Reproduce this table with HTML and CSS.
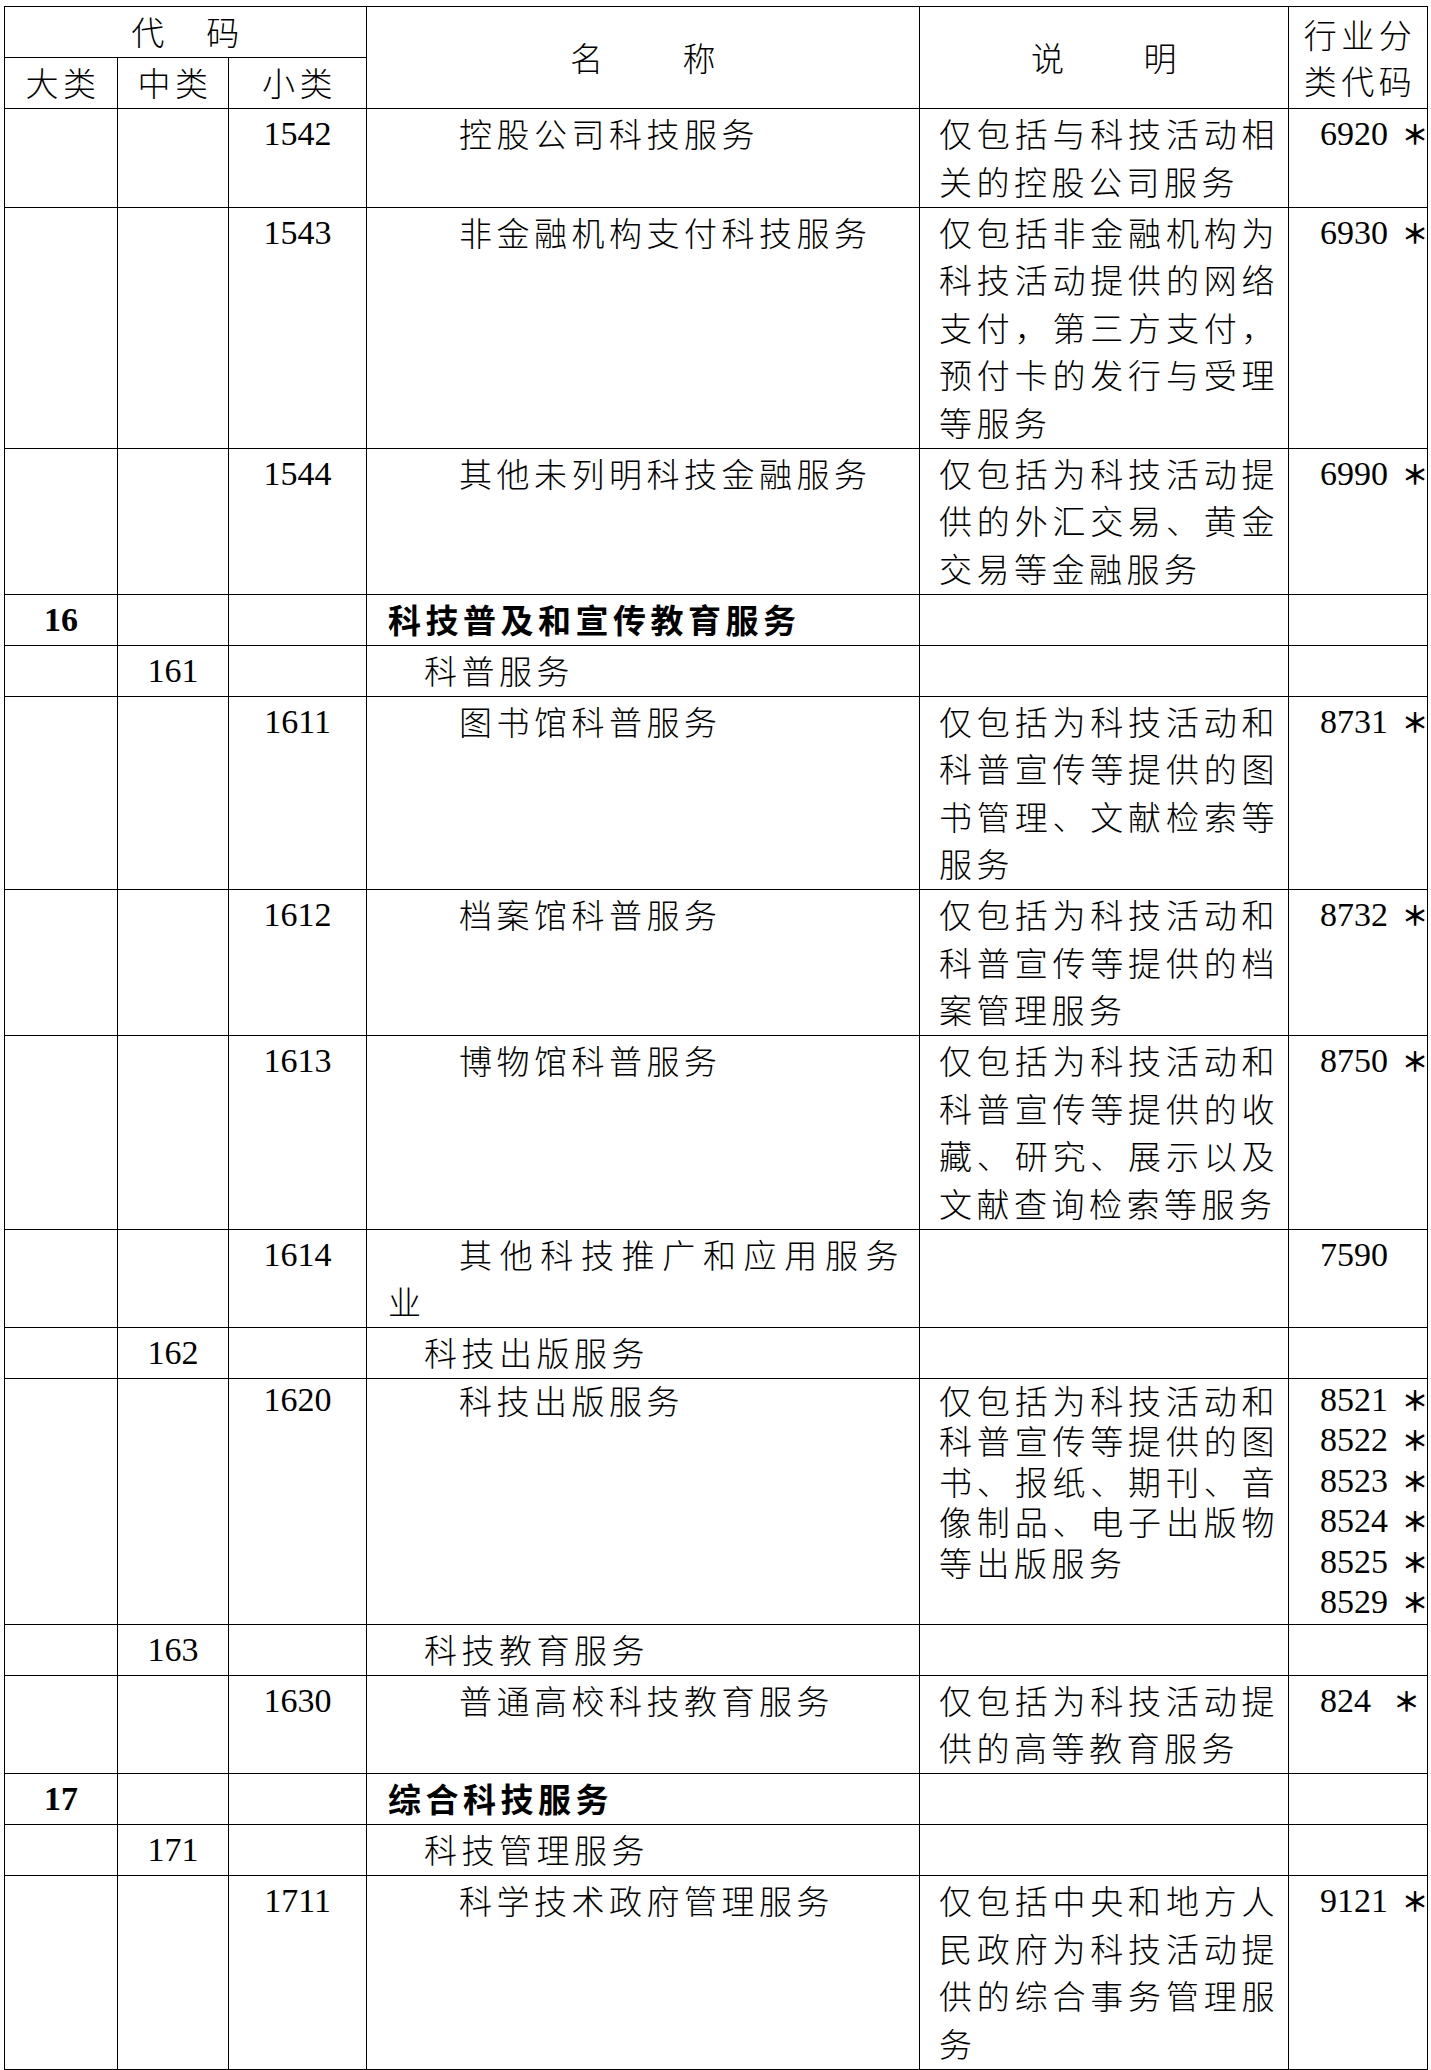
FILE: index.html
```html
<!DOCTYPE html>
<html lang="zh-CN">
<head>
<meta charset="utf-8">
<title>科技服务分类</title>
<link rel="stylesheet" href="styles.css">
</head>
<body>
<div class="page">
<table class="code-table">
  <colgroup>
    <col class="c-major"><col class="c-mid"><col class="c-minor"><col class="c-name"><col class="c-desc"><col class="c-ind">
  </colgroup>
  <thead>
    <tr class="h1">
      <th colspan="3">代　码</th>
      <th rowspan="2">名　　称</th>
      <th rowspan="2">说　　明</th>
      <th rowspan="2" class="h-ind">行业分<br>类代码</th>
    </tr>
    <tr class="h2"><th>大类</th><th>中类</th><th>小类</th></tr>
  </thead>
  <tbody>
    <tr><td></td><td></td><td class="num">1542</td><td class="name l3">控股公司科技服务</td><td class="desc">仅包括与科技活动相关的控股公司服务</td><td class="ind">6920 <span class="star">＊</span></td></tr>
    <tr><td></td><td></td><td class="num">1543</td><td class="name l3">非金融机构支付科技服务</td><td class="desc">仅包括非金融机构为科技活动提供的网络支付，第三方支付，预付卡的发行与受理等服务</td><td class="ind">6930 <span class="star">＊</span></td></tr>
    <tr><td></td><td></td><td class="num">1544</td><td class="name l3">其他未列明科技金融服务</td><td class="desc">仅包括为科技活动提供的外汇交易、黄金交易等金融服务</td><td class="ind">6990 <span class="star">＊</span></td></tr>
    <tr><td class="num major">16</td><td></td><td></td><td class="name l1 bold">科技普及和宣传教育服务</td><td></td><td></td></tr>
    <tr><td></td><td class="num">161</td><td></td><td class="name l2">科普服务</td><td></td><td></td></tr>
    <tr><td></td><td></td><td class="num">1611</td><td class="name l3">图书馆科普服务</td><td class="desc">仅包括为科技活动和科普宣传等提供的图书管理、文献检索等服务</td><td class="ind">8731 <span class="star">＊</span></td></tr>
    <tr><td></td><td></td><td class="num">1612</td><td class="name l3">档案馆科普服务</td><td class="desc">仅包括为科技活动和科普宣传等提供的档案管理服务</td><td class="ind">8732 <span class="star">＊</span></td></tr>
    <tr><td></td><td></td><td class="num">1613</td><td class="name l3">博物馆科普服务</td><td class="desc">仅包括为科技活动和科普宣传等提供的收藏、研究、展示以及文献查询检索等服务</td><td class="ind">8750 <span class="star">＊</span></td></tr>
    <tr><td></td><td></td><td class="num">1614</td><td class="name l3">其他科技推广和应用服务业</td><td class="desc"></td><td class="ind">7590</td></tr>
    <tr><td></td><td class="num">162</td><td></td><td class="name l2">科技出版服务</td><td></td><td></td></tr>
    <tr class="tight"><td></td><td></td><td class="num">1620</td><td class="name l3">科技出版服务</td><td class="desc">仅包括为科技活动和科普宣传等提供的图书、报纸、期刊、音像制品、电子出版物等出版服务</td><td class="ind">8521 <span class="star">＊</span><br>8522 <span class="star">＊</span><br>8523 <span class="star">＊</span><br>8524 <span class="star">＊</span><br>8525 <span class="star">＊</span><br>8529 <span class="star">＊</span></td></tr>
    <tr><td></td><td class="num">163</td><td></td><td class="name l2">科技教育服务</td><td></td><td></td></tr>
    <tr><td></td><td></td><td class="num">1630</td><td class="name l3">普通高校科技教育服务</td><td class="desc">仅包括为科技活动提供的高等教育服务</td><td class="ind">824&nbsp; <span class="star">＊</span></td></tr>
    <tr><td class="num major">17</td><td></td><td></td><td class="name l1 bold">综合科技服务</td><td></td><td></td></tr>
    <tr><td></td><td class="num">171</td><td></td><td class="name l2">科技管理服务</td><td></td><td></td></tr>
    <tr><td></td><td></td><td class="num">1711</td><td class="name l3">科学技术政府管理服务</td><td class="desc">仅包括中央和地方人民政府为科技活动提供的综合事务管理服务</td><td class="ind">9121 <span class="star">＊</span></td></tr>
  </tbody>
</table>
</div>
</body>
</html>
```

FILE: styles.css
```css
html, body {
  margin: 0;
  padding: 0;
  background: #fff;
  color: #000;
}

.page {
  padding: 6px 4px 2px 4px;
}

.code-table {
  width: 1423px;
  table-layout: fixed;
  border-collapse: collapse;
  font-family: "Noto Sans CJK SC", "Noto Sans CJK JP", sans-serif;
  font-weight: 300;
  font-size: 33px;
  letter-spacing: 4.5px;
  line-height: 47.5px;
}

.c-major { width: 113px; }
.c-mid   { width: 111px; }
.c-minor { width: 138px; }
.c-name  { width: 553px; }
.c-desc  { width: 369px; }
.c-ind   { width: 139px; }

.code-table th,
.code-table td {
  border: 1px solid #000;
  padding: 1px 0 1.5px 0;
  vertical-align: top;
}

.code-table th {
  font-weight: 300;
  text-align: center;
  vertical-align: middle;
  padding-left: 4px;
}

.h1 th { height: 43px; }
.h2 th { height: 44px; }

.h-ind { line-height: 46px; }

.num {
  font-family: "Liberation Serif", "Times New Roman", serif;
  font-size: 34px;
  letter-spacing: 0;
  text-align: center;
}

.major { font-weight: 700; }

.name {
  padding-left: 21px !important;
  padding-right: 16px !important;
  text-align: justify;
}

.l1 { text-indent: 0; }
.l2 { text-indent: 36px; }
.l3 { text-indent: 71px; }

.bold { font-weight: 700; }

.desc {
  padding-left: 19px !important;
  padding-right: 9px !important;
  text-align: justify;
}

.ind {
  font-family: "Liberation Serif", "Times New Roman", serif;
  font-size: 34px;
  letter-spacing: 0;
  padding-left: 31px !important;
  white-space: nowrap;
}

.star {
  font-family: "Noto Sans CJK SC", sans-serif;
  font-weight: 700;
  font-size: 27px;
  line-height: 0;
  margin-left: 5px;
}

.tight td { line-height: 40.4px; }
```
